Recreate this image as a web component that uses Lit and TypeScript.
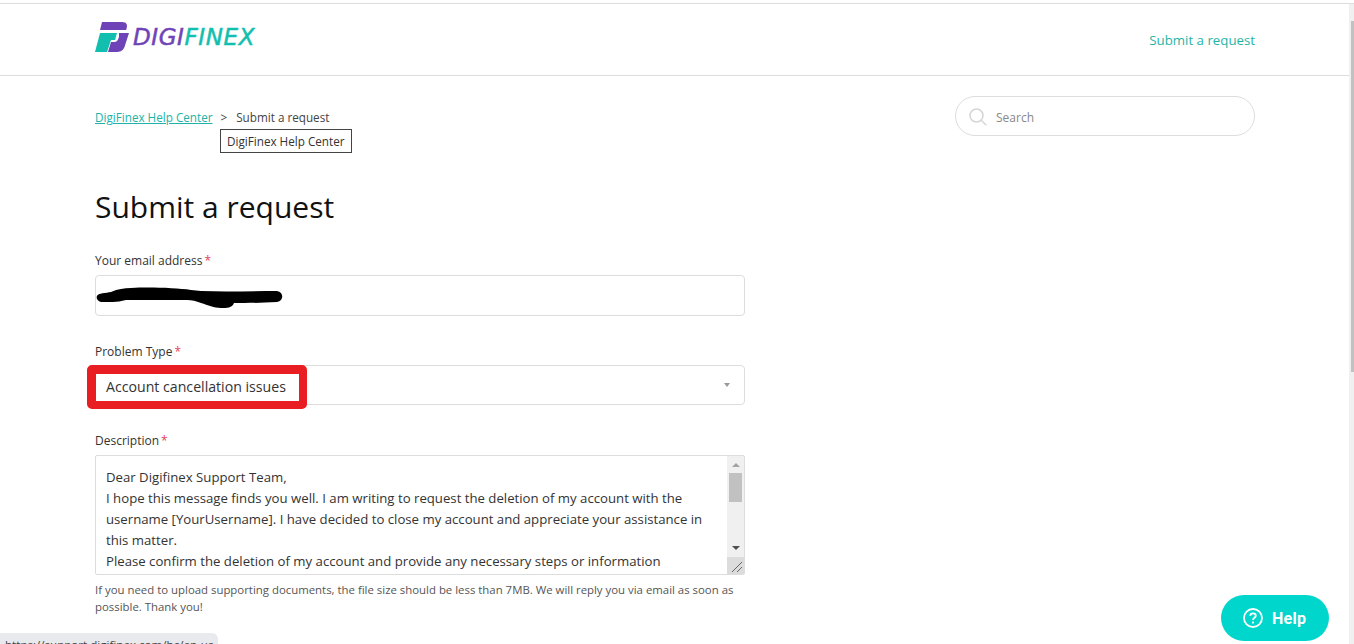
import { LitElement, css, html } from 'lit'
import { customElement } from 'lit/decorators.js'

const FONT = css`'Open Sans', 'Noto Sans', sans-serif`

@customElement('app-root')
export class AppRoot extends LitElement {
  static styles = css`
    * {
      box-sizing: border-box;
    }

    :host {
      display: flex;
      position: relative;
      width: 1354px;
      height: 644px;
      overflow: hidden;
      background: #fff;
      font-family: ${FONT};
      font-size: 14px;
      color: #333;
    }

    .page {
      flex: 1;
      min-width: 0;
      padding-top: 3px;
    }

    .page-scroll {
      width: 5px;
      margin-top: 3px;
      border-top: 1px solid #ddd;
      background: #f0f0f0;
      padding: 17px 0 0 2px;
    }

    .page-thumb {
      height: 351px;
      background: #c1c1c1;
    }

    header {
      height: 73px;
      border-top: 1px solid #ddd;
      border-bottom: 1px solid #ddd;
      padding: 0 94px 0 95px;
      display: flex;
      justify-content: space-between;
      align-items: flex-start;
    }

    .brand {
      display: flex;
      align-items: center;
      gap: 4px;
      margin-top: 18px;
    }

    .wordmark {
      font-family: 'DejaVu Sans', sans-serif;
      font-style: italic;
      font-weight: 400;
      font-size: 23px;
      line-height: 30px;
      letter-spacing: 0.6px;
      -webkit-text-stroke: 0.5px currentColor;
      color: #6f43b8;
      white-space: nowrap;
    }

    .wordmark span {
      color: #12bfae;
    }

    .header-link {
      margin-top: 26px;
      font-size: 13.25px;
      line-height: 20px;
      color: #1fb5a5;
    }

    main {
      width: 1160px;
      margin-left: 95px;
    }

    .top-row {
      display: flex;
      justify-content: space-between;
      align-items: flex-start;
      padding-top: 20px;
      height: 109px;
    }

    .crumbs {
      position: relative;
      display: flex;
      gap: 8px;
      font-size: 11.7px;
      line-height: 18px;
      margin-top: 12px;
      color: #444;
    }

    .crumbs a {
      color: #21b3a9;
      text-decoration: underline;
    }

    .sep {
      margin-right: 1px;
    }

    .tip {
      position: absolute;
      left: 125px;
      top: 21px;
      height: 24px;
      padding: 0 6px;
      display: flex;
      align-items: center;
      background: #fff;
      border: 1px solid #444;
      color: #333;
      white-space: nowrap;
    }

    .search {
      width: 300px;
      height: 40px;
      border: 1px solid #ddd;
      border-radius: 20px;
      display: flex;
      align-items: center;
      gap: 9px;
      padding: 2px 0 0 13px;
      color: #888;
      font-size: 12px;
    }

    h1 {
      margin: 0;
      height: 66px;
      font-weight: 400;
      font-size: 30px;
      line-height: 44px;
      color: #111;
    }

    .form {
      width: 650px;
      display: flex;
      flex-direction: column;
    }

    .label {
      padding-top: 1px;
      font-size: 12px;
      line-height: 18px;
      color: #333;
      margin-bottom: 5px;
    }

    .label.tight {
      margin-bottom: 4px;
    }

    .label i {
      color: #e9405a;
      font-style: normal;
      margin-left: 2px;
    }

    .field {
      border: 1px solid #ddd;
      border-radius: 4px;
      background: #fff;
    }

    .email {
      height: 41px;
      display: flex;
      align-items: center;
      margin-bottom: 26px;
    }

    .select {
      position: relative;
      height: 40px;
      display: flex;
      align-items: center;
      justify-content: space-between;
      padding: 0 14px 0 10px;
      margin-bottom: 26px;
      font-size: 14.15px;
      line-height: 20px;
    }

    .select-value {
      margin-top: 4px;
    }

    .caret {
      width: 0;
      height: 0;
      border-left: 3px solid transparent;
      border-right: 3px solid transparent;
      border-top: 4px solid #999;
    }

    .mark {
      position: absolute;
      left: -9px;
      top: -1px;
      width: 220px;
      height: 44px;
      border: solid #e81e22;
      border-width: 9px 8px 8px 9px;
      border-radius: 5px;
    }

    .area {
      height: 120px;
      display: flex;
      overflow: hidden;
      border-radius: 2px;
    }

    .area-text {
      flex: 1;
      padding: 11px 10px 0;
      font-size: 13.2px;
      line-height: 21px;
    }

    .area-text p {
      margin: 0;
    }

    .area-bar {
      width: 17px;
      background: #f0f0f0;
      display: flex;
      flex-direction: column;
      align-items: center;
    }

    .up {
      margin-top: 7px;
      border-left: 4px solid transparent;
      border-right: 4px solid transparent;
      border-bottom: 4px solid #a3a3a3;
    }

    .area-thumb {
      width: 13px;
      height: 29px;
      margin-top: 6px;
      background: #c1c1c1;
    }

    .down {
      margin-top: 44px;
      border-left: 4px solid transparent;
      border-right: 4px solid transparent;
      border-top: 4px solid #505050;
    }

    .grip {
      margin-top: auto;
      width: 17px;
      height: 17px;
      background: #dcdcdc;
    }

    .hint {
      margin: 6px 0 0;
      font-size: 11.4px;
      line-height: 17px;
      color: #555;
    }

    .status {
      position: absolute;
      left: 0;
      bottom: 0;
      width: 218px;
      height: 11px;
      padding: 4px 0 0 5px;
      overflow: hidden;
      background: #e8eaed;
      border-top-right-radius: 6px;
      font-size: 11.6px;
      line-height: 16px;
      color: #444;
      white-space: nowrap;
    }

    .help {
      position: absolute;
      left: 1221px;
      top: 595px;
      width: 108px;
      height: 46px;
      border-radius: 23px;
      background: #00d6cc;
      color: #fff;
      display: flex;
      align-items: center;
      gap: 9px;
      padding-left: 22px;
      font-family: Roboto, sans-serif;
      font-weight: 700;
      font-size: 16px;
      letter-spacing: 0.3px;
    }
  `

  render() {
    return html`
      <div class="page">
        <header>
          <div class="brand">
            <svg width="34" height="30" viewBox="0 0 34 30">
              <path fill="#6f43b8" d="M7 0H27C32 0 33 3 31 8H5Z" />
              <path fill="#6f43b8" d="M24 11H34L29.5 25C28 29 25 30 21 30H13L16 20H19C22 20 23 18 24 15Z" />
              <path fill="#12bfae" d="M5 11H22L20 18H16L12 30H0Z" />
            </svg>
            <div class="wordmark">DIGI<span>FINEX</span></div>
          </div>
          <div class="header-link">Submit a request</div>
        </header>
        <main>
          <div class="top-row">
            <div class="crumbs">
              <a>DigiFinex Help Center</a>
              <span class="sep">&gt;</span>
              <span>Submit a request</span>
              <div class="tip">DigiFinex Help Center</div>
            </div>
            <div class="search">
              <svg width="18" height="18" viewBox="0 0 18 18" fill="none" stroke="#d5d5d5" stroke-width="1.5">
                <circle cx="7.5" cy="7.5" r="6.5" />
                <path d="M12.3 12.3L17.3 17.3" />
              </svg>
              <span>Search</span>
            </div>
          </div>
          <h1>Submit a request</h1>
          <div class="form">
            <div class="label">Your email address<i>*</i></div>
            <div class="field email">
              <svg width="187" height="26" viewBox="0 0 187 26">
                <path
                  fill="#000"
                  d="M1 13C2 10 10 10 15 9C22 6 28 5 35 5C55 4 80 5 95 7L105 8C130 9 155 8 181 8C188 9 188 18 181 19C165 20 150 20 138 20C136 25 131 25 125 25C118 25 112 22 105 20C100 18 96 17 91 17C70 17 50 17 30 17C25 18 21 19 17 19C12 19 9 19 5 19C1 18 0 15 1 13Z"
                />
              </svg>
            </div>
            <div class="label tight">Problem Type<i>*</i></div>
            <div class="field select">
              <span class="select-value">Account cancellation issues</span>
              <span class="caret"></span>
              <div class="mark"></div>
            </div>
            <div class="label">Description<i>*</i></div>
            <div class="field area">
              <div class="area-text">
                <p>Dear Digifinex Support Team,</p>
                <p>
                  I hope this message finds you well. I am writing to request the deletion of my account with the
                  username [YourUsername]. I have decided to close my account and appreciate your assistance in
                  this matter.
                </p>
                <p>Please confirm the deletion of my account and provide any necessary steps or information</p>
              </div>
              <div class="area-bar">
                <span class="up"></span>
                <span class="area-thumb"></span>
                <span class="down"></span>
                <svg class="grip" viewBox="0 0 17 17" fill="none" stroke="#666">
                  <path d="M5 15L15 5M10 15L15 10" />
                </svg>
              </div>
            </div>
            <p class="hint">
              If you need to upload supporting documents, the file size should be less than 7MB. We will reply you via
              email as soon as possible. Thank you!
            </p>
          </div>
        </main>
      </div>
      <div class="page-scroll"><div class="page-thumb"></div></div>
      <div class="status">https://support.digifinex.com/hc/en-us</div>
      <div class="help">
        <svg width="20" height="20" viewBox="0 0 20 20" fill="none" stroke="#fff" stroke-width="1.8">
          <circle cx="10" cy="10" r="9" />
          <path d="M7.3 7.8C7.3 4.6 12.8 4.6 12.8 7.8C12.8 9.8 10 9.8 10 12" />
          <path d="M10 13.6V15.4" />
        </svg>
        <span>Help</span>
      </div>
    `
  }
}
